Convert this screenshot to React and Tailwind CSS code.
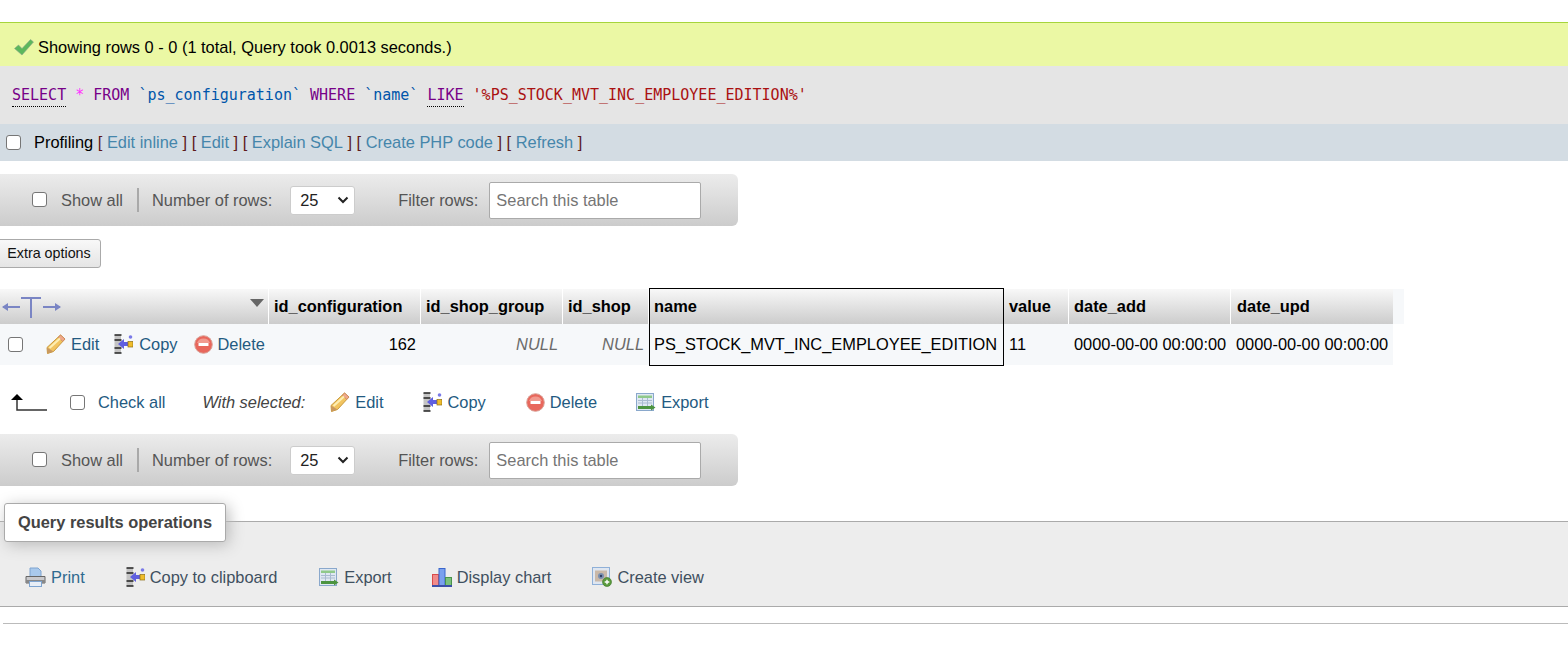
const F = { fontFamily: '"Liberation Sans", Arial, sans-serif' };

function Check() {
  return (
    <svg width="20" height="18" viewBox="0 0 20 18" className="shrink-0">
      <path d="M0.5 10.5 L4.5 7 L8 10.5 L16.5 1.5 L19.5 4 L8 17 Z" fill="#5cb85c" stroke="#8fa58f" strokeWidth="0.6" />
    </svg>
  );
}
function Pencil() {
  return (
    <svg width="20" height="20" viewBox="0 0 20 20" className="shrink-0">
      <path d="M14.5 1 L19 5 L7.5 17.5 L1.5 19.5 L1 13.5 Z" fill="#f2c460" stroke="#c99a3c" strokeWidth="1" />
      <path d="M14.5 1 L19 5 L16.8 7.4 L12.3 3.4 Z" fill="#f0a88c" stroke="#c9885c" strokeWidth="0.8" />
      <path d="M3.5 14 L14 4.5" stroke="#fdeeb2" strokeWidth="2.2" />
      <path d="M1 13.5 L7.5 17.5 L1.5 19.5 Z" fill="#c9985f" />
    </svg>
  );
}
function CopyIcon() {
  return (
    <svg width="19" height="20" viewBox="0 0 19 20" className="shrink-0">
      <rect x="0.5" y="1" width="6.5" height="18" fill="#c4c4c4" />
      <path d="M0.5 1h7M0.5 6h7M0.5 14h7M0.5 19h7" stroke="#222" strokeWidth="1.6" />
      <path d="M4 10 L10 5 V8 H14 V12 H10 V15 Z" fill="#5f5fe0" />
      <rect x="14" y="7.5" width="5" height="5.5" fill="#f0bd2c" stroke="#8c6e14" strokeWidth="0.7" />
      <circle cx="16.5" cy="3" r="1.8" fill="#7a7ae8" />
    </svg>
  );
}
function DeleteIcon() {
  return (
    <svg width="19" height="19" viewBox="0 0 19 19" className="shrink-0">
      <circle cx="9.5" cy="9.5" r="8.8" fill="#e8675c" stroke="#d9a096" strokeWidth="1" />
      <path d="M3 8 A7 7 0 0 1 16 8 Z" fill="#f19a8f" />
      <rect x="4.5" y="8" width="10" height="3" rx="0.5" fill="#fff" />
    </svg>
  );
}
function ExportIcon() {
  return (
    <svg width="20" height="19" viewBox="0 0 20 19" className="shrink-0">
      <rect x="0.5" y="0.5" width="17" height="17" fill="#dfe8f3" stroke="#8aa8cc" />
      <rect x="2" y="2.5" width="14" height="2.5" fill="#8fc98a" />
      <path d="M2 7.5h14M2 10h14M6.5 5v8M11.5 5v8" stroke="#a9bbd0" strokeWidth="1" />
      <path d="M2 13 H15 V11.5 L19.5 14.5 L15 17.5 V16 H2 Z" fill="#4c9440" />
    </svg>
  );
}
function PrintIcon() {
  return (
    <svg width="21" height="20" viewBox="0 0 21 20" className="shrink-0">
      <path d="M5 1 H13 L16 4 V10 H5 Z" fill="#a9c9ec" stroke="#7ea4d0" />
      <path d="M1 9.5 H20 V16 H1 Z" fill="#c9c9cc" stroke="#666" />
      <rect x="1" y="13" width="19" height="3" fill="#888" />
      <rect x="4.5" y="14.5" width="12" height="5" fill="#e8eef6" stroke="#7ea4d0" />
    </svg>
  );
}
function ChartIcon() {
  return (
    <svg width="20" height="19" viewBox="0 0 20 19" className="shrink-0">
      <rect x="0.5" y="6.5" width="6" height="11" fill="#f08a8a" stroke="#d84a4a" />
      <rect x="7" y="0.5" width="6" height="17" fill="#7aa0ee" stroke="#3a66cc" />
      <rect x="13.5" y="9.5" width="6" height="8" fill="#7cc07c" stroke="#4a944a" />
      <rect x="0" y="17" width="20" height="2" fill="#3d4fa8" />
    </svg>
  );
}
function ViewIcon() {
  return (
    <svg width="20" height="20" viewBox="0 0 20 20" className="shrink-0">
      <rect x="0.5" y="0.5" width="17" height="17" fill="#dfe6f0" stroke="#8fb0d8" />
      <rect x="3" y="3.5" width="12" height="11" fill="#c9b8a8" />
      <circle cx="9" cy="9" r="3" fill="#7a8fb0" />
      <circle cx="9" cy="9" r="1.2" fill="#2f3f66" />
      <circle cx="15" cy="15" r="4.5" fill="#5a9a3c" stroke="#3f7a2c" strokeWidth="0.6" />
      <path d="M12.7 15h4.6M15 12.7v4.6" stroke="#fff" strokeWidth="1.4" />
    </svg>
  );
}
function Box({ className = "" }) {
  return <span className={`inline-block w-[15px] h-[15px] rounded-[3px] border border-[#767676] bg-white shrink-0 ${className}`} />;
}
function Navbar() {
  return (
    <div className="w-[738px] h-[52px] rounded-r-[6px] bg-gradient-to-b from-[#ececec] to-[#cccccc] flex items-center text-[#555] pl-[32px]">
      <Box className="-mt-[2px]" />
      <span className="ml-[14px]">Show all</span>
      <span className="ml-[14px] w-[2px] h-[24px] bg-[#a9a9a9]" />
      <span className="ml-[13px]">Number of rows:</span>
      <span className="ml-[18px] w-[65px] h-[29px] bg-white border border-[#ccc] rounded-[3px] flex items-center justify-between pl-[9px] pr-[5px] text-[#222]">
        25
        <svg width="12" height="8" viewBox="0 0 12 8"><path d="M1.5 1.5 L6 6 L10.5 1.5" fill="none" stroke="#222" strokeWidth="2" /></svg>
      </span>
      <span className="ml-[43px]">Filter rows:</span>
      <span className="ml-[11px] w-[212px] h-[37px] bg-white border border-[#aaa] rounded-[2px] flex items-center pl-[6px] text-[#757575]">Search this table</span>
    </div>
  );
}
function Action({ icon, label, className = "" }) {
  return (
    <span className={`flex items-center gap-[5px] text-[#235a81] ${className}`}>
      {icon}
      <span>{label}</span>
    </span>
  );
}
const Link = ({ children }) => <span className="text-[#4586ab]">{children}</span>;
const Br = ({ children }) => <span className="text-[#5e1a1a]">{children}</span>;
const H = ({ children, className = "" }) => (
  <div className={`h-[35px] bg-gradient-to-b from-[#f8f8f8] to-[#cccccc] flex items-center px-[5px] font-bold text-black ${className}`}>{children}</div>
);
const columns = "grid-cols-[269px_152px_142px_86px_355px_65px_162px_162px_11px]";

export default function App() {
  return (
    <div className="w-[1568px] h-[662px] bg-white overflow-hidden text-[16.4px] text-black pt-[22px]" style={F}>
      <div className="h-[44px] bg-[#ebf8a4] border-t border-[#a6d53c] flex items-center pl-[14px] pt-[5px] gap-[4px]">
        <Check />
        <span>Showing rows 0 - 0 (1 total, Query took 0.0013 seconds.)</span>
      </div>
      <div className="h-[58px] bg-[#e5e5e5] flex items-center pl-[12px] pt-[1px] text-[15px] whitespace-pre" style={{ fontFamily: '"DejaVu Sans Mono", monospace' }}>
        <span className="text-[#770088] border-b border-dotted border-black">SELECT</span>
        <span> </span>
        <span className="text-[#ff33ff]">*</span>
        <span> </span>
        <span className="text-[#770088]">FROM</span>
        <span className="text-[#0055aa]"> `ps_configuration` </span>
        <span className="text-[#770088]">WHERE</span>
        <span className="text-[#0055aa]"> `name` </span>
        <span className="text-[#770088] border-b border-dotted border-black">LIKE</span>
        <span> </span>
        <span className="text-[#aa1111]">'%PS_STOCK_MVT_INC_EMPLOYEE_EDITION%'</span>
      </div>
      <div className="h-[37px] bg-[#d3dce3] flex items-center pl-[6px] whitespace-pre">
        <Box />
        <span className="ml-[13px]">Profiling </span>
        <Br>[ </Br><Link>Edit inline</Link><Br> ] [ </Br><Link>Edit</Link><Br> ] [ </Br><Link>Explain SQL</Link><Br> ] [ </Br><Link>Create PHP code</Link><Br> ] [ </Br><Link>Refresh</Link><Br> ]</Br>
      </div>

      <div className="mt-[13px]"><Navbar /></div>

      <div className="mt-[13px] -ml-[3px] w-[104px] h-[29px] bg-gradient-to-b from-[#f8f8f8] to-[#e5e5e5] border border-[#aaa] rounded-[3px] flex items-center justify-center text-[14.3px] text-[#111]">
        Extra options
      </div>

      <div className={`mt-[21px] w-[1404px] grid ${columns} gap-x-0`}>
        <H className="!px-0 relative border-r border-white">
          <svg width="62" height="24" viewBox="0 0 62 24" className="ml-[2px]">
            <g fill="none" stroke="#7a85c4" strokeWidth="2">
              <path d="M1 12 H18M19 3 H39M29 3 V23M41 12 H58" />
            </g>
            <path d="M0 12 L6 8 V16 Z M59 12 L53 8 V16 Z" fill="#7a85c4" />
          </svg>
          <svg width="14" height="8" viewBox="0 0 14 8" className="absolute left-[250px] top-[10px]"><path d="M0 0 H14 L7 8 Z" fill="#666" /></svg>
        </H>
        <H className="border-r border-white">id_configuration</H>
        <H className="border-r border-white">id_shop_group</H>
        <H className="border-r border-white">id_shop</H>
        <H className="border-x border-t border-black !px-[4px] -mt-px !h-[36px]">name</H>
        <H className="border-r border-white">value</H>
        <H className="border-r border-white">date_add</H>
        <H className="!pl-[6px]">date_upd</H>
        <div className="h-[35px] bg-[#f6f8fa]" />

        <div className="h-[41px] bg-[#f6f8fa] flex items-center text-[#235a81]">
          <Box className="ml-[8px]" />
          <Action icon={<Pencil />} label="Edit" className="ml-[23px] gap-[4px]" />
          <Action icon={<CopyIcon />} label="Copy" className="ml-[15px] gap-[6px]" />
          <Action icon={<DeleteIcon />} label="Delete" className="ml-[16px] gap-[5px]" />
        </div>
        <div className="h-[41px] bg-[#f6f8fa] flex items-center justify-end px-[5px]">162</div>
        <div className="h-[41px] bg-[#f6f8fa] flex items-center justify-end px-[5px] italic text-[#6b6b6b]">NULL</div>
        <div className="h-[41px] bg-[#f6f8fa] flex items-center justify-end px-[5px] italic text-[#6b6b6b]">NULL</div>
        <div className="h-[42px] bg-[#f6f8fa] border-x border-b border-black flex items-center px-[4px] whitespace-nowrap">PS_STOCK_MVT_INC_EMPLOYEE_EDITION</div>
        <div className="h-[41px] bg-[#f6f8fa] flex items-center px-[5px]">11</div>
        <div className="h-[41px] bg-[#f6f8fa] flex items-center px-[5px] whitespace-nowrap">0000-00-00 00:00:00</div>
        <div className="h-[41px] bg-[#f6f8fa] flex items-center px-[5px] whitespace-nowrap">0000-00-00 00:00:00</div>
        <div />
      </div>

      <div className="h-[69px] -mt-px pt-[6px] flex items-center text-[#235a81]">
        <svg width="36" height="20" viewBox="0 0 36 20" className="ml-[11px]">
          <path d="M6 6 V17 H36" fill="none" stroke="#333" strokeWidth="1.5" />
          <path d="M0 7 L6 1 L12 7 Z" fill="#000" />
        </svg>
        <Box className="ml-[23px]" />
        <span className="ml-[13px]">Check all</span>
        <span className="ml-[37px] italic text-[#444]">With selected:</span>
        <Action icon={<Pencil />} label="Edit" className="ml-[25px] gap-[4px]" />
        <Action icon={<CopyIcon />} label="Copy" className="ml-[40px]" />
        <Action icon={<DeleteIcon />} label="Delete" className="ml-[40px] gap-[5px]" />
        <Action icon={<ExportIcon />} label="Export" className="ml-[39px]" />
      </div>

      <Navbar />

      <div className="relative mt-[35px] h-[86px] bg-[#ededed] border-y border-[#aaa] flex items-center pt-[27px] text-[#444]">
        <div className="absolute left-[4px] -top-[19px] w-[222px] h-[39px] bg-white border border-[#aaa] rounded-[3px] shadow-[3px_3px_15px_#bbb] flex items-center justify-center font-bold text-[#444]">
          Query results operations
        </div>
        <Action icon={<PrintIcon />} label="Print" className="ml-[25px] gap-[3px] !text-[#2f6a8f]" />
        <Action icon={<CopyIcon />} label="Copy to clipboard" className="ml-[41px] !text-[#3f5060] gap-[5px]" />
        <Action icon={<ExportIcon />} label="Export" className="ml-[42px] !text-[#3f5060]" />
        <Action icon={<ChartIcon />} label="Display chart" className="ml-[40px] !text-[#3f5060]" />
        <Action icon={<ViewIcon />} label="Create view" className="ml-[41px] !text-[#3f5060] gap-[4px]" />
      </div>
      <div className="mt-[16px] ml-[3px] h-px bg-[#bbb]" />
    </div>
  );
}
